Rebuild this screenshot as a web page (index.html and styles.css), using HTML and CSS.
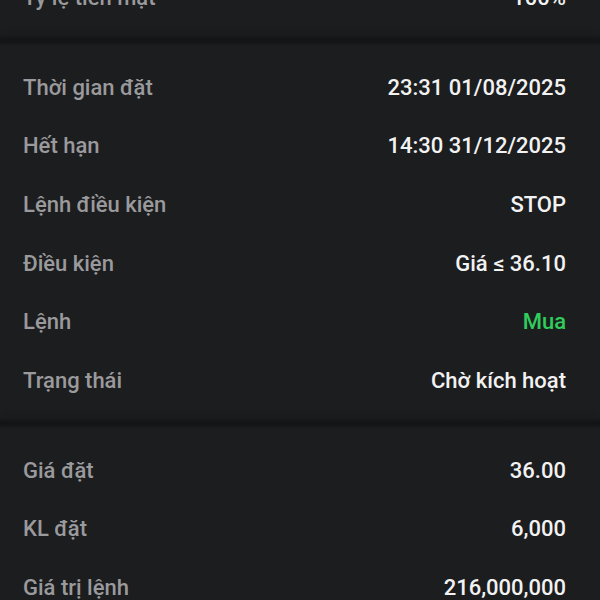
FILE: index.html
```html
<!DOCTYPE html>
<html lang="vi">
<head>
    <meta charset="UTF-8">
    <title>Chi tiết lệnh</title>
    <link rel="stylesheet" href="styles.css">
</head>
<body>
<div class="page">
    <section class="card">
        <div class="row"><span class="label">Tỷ lệ tiền mặt</span><span class="value">100%</span></div>
    </section>
    <div class="gap"></div>
    <section class="card">
        <div class="row"><span class="label">Thời gian đặt</span><span class="value">23:31 01/08/2025</span></div>
        <div class="row"><span class="label">Hết hạn</span><span class="value">14:30 31/12/2025</span></div>
        <div class="row"><span class="label">Lệnh điều kiện</span><span class="value">STOP</span></div>
        <div class="row"><span class="label">Điều kiện</span><span class="value">Giá ≤ 36.10</span></div>
        <div class="row"><span class="label">Lệnh</span><span class="value buy">Mua</span></div>
        <div class="row"><span class="label">Trạng thái</span><span class="value">Chờ kích hoạt</span></div>
    </section>
    <div class="gap"></div>
    <section class="card">
        <div class="row"><span class="label">Giá đặt</span><span class="value">36.00</span></div>
        <div class="row"><span class="label">KL đặt</span><span class="value">6,000</span></div>
        <div class="row"><span class="label">Giá trị lệnh</span><span class="value">216,000,000</span></div>
    </section>
</div>
</body>
</html>
```

FILE: styles.css
```css
*{margin:0; padding:0; box-sizing:border-box;}
html,body{height:100%; overflow:hidden;}
body{background:#1c1d1f; font-family:Roboto, "Noto Sans", sans-serif; font-weight:500;}
.page{margin-top:-45px;}
.card{background:#1c1d1f; padding:13px 34px 8px 23px;}
.row{height:58.7px; display:flex; align-items:center; justify-content:space-between; font-size:22px;}
.label{color:#9a9a9c;}
.value{color:#f2f2f2;}
.value.buy{color:#30cc5c;}
.gap{height:10px; background:linear-gradient(to bottom, #1a1b1d 0%, #131415 45%, #141516 70%, #1a1b1d 100%);
box-shadow:0 -6px 6px -4px rgba(0,0,0,0.25);}
```
